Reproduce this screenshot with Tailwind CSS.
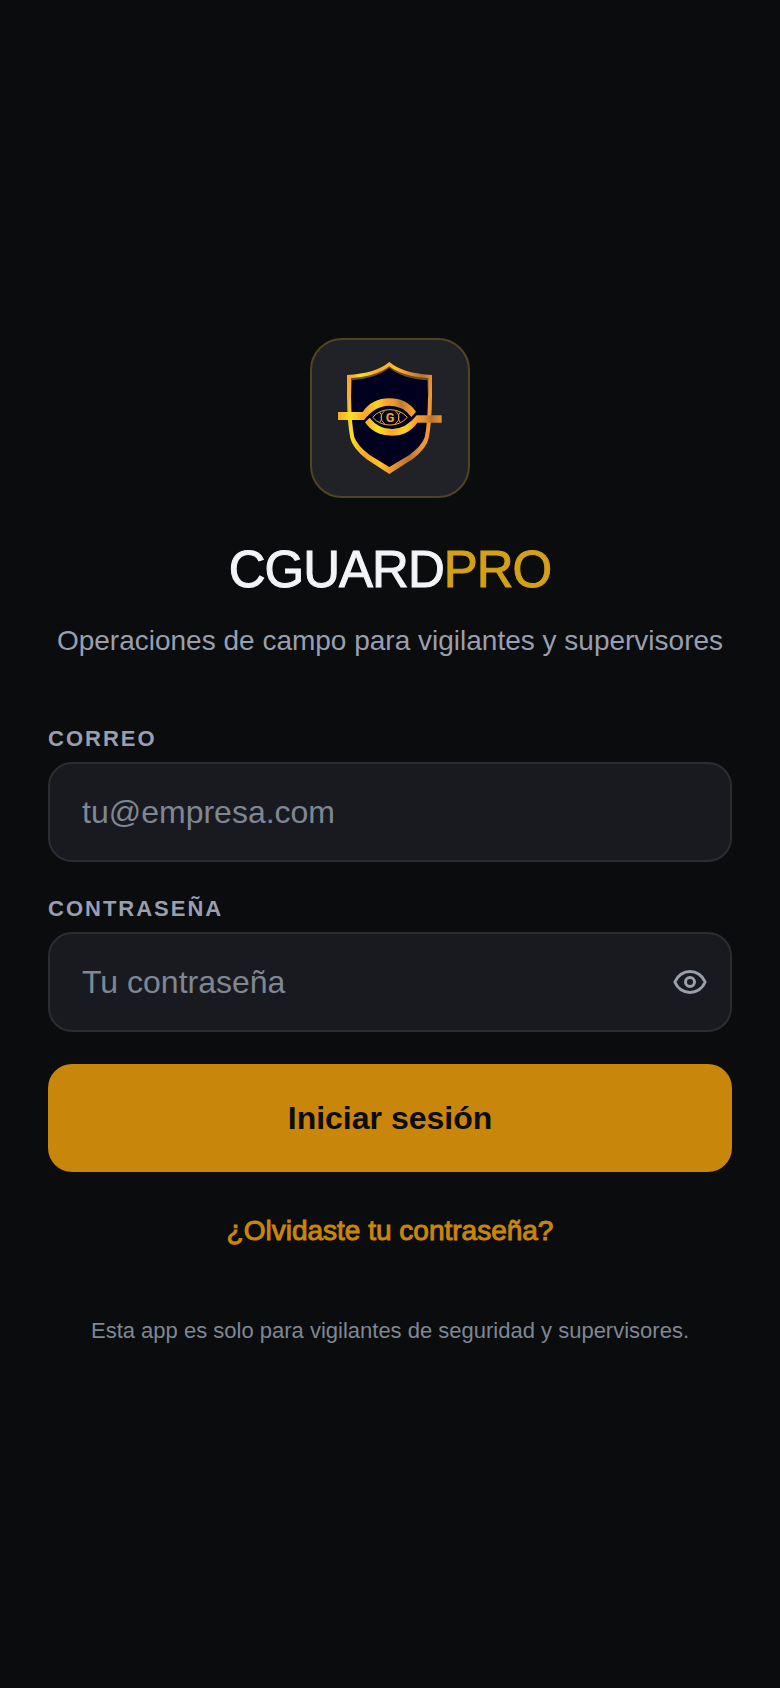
<!DOCTYPE html>
<html lang="es">
<head>
    <meta charset="UTF-8">
    <meta name="viewport" content="width=device-width, initial-scale=1.0">
    <title>CGUARDPRO</title>
    <script src="https://cdn.jsdelivr.net/npm/@tailwindcss/browser@4"></script>
</head>
<body class="bg-[#0a0c0e] font-['Liberation_Sans',Arial,sans-serif]">
    <main class="min-h-screen flex flex-col justify-center px-12">
        <!-- Logo -->
        <div class="self-center size-40 flex items-center justify-center rounded-[32px] border-2 border-[#524322] bg-[#212227]">
            <svg class="size-[120px] shrink-0" viewBox="90 84 360 360" role="img" aria-label="CGuardPro">
                <defs>
                    <linearGradient id="gold" gradientUnits="userSpaceOnUse" x1="140" y1="200" x2="396" y2="240">
                        <stop offset="0" stop-color="#fda52c" />
                        <stop offset="0.12" stop-color="#f6e223" />
                        <stop offset="0.32" stop-color="#fda52c" />
                        <stop offset="0.5" stop-color="#fbc423" />
                        <stop offset="0.58" stop-color="#fda52c" />
                        <stop offset="0.82" stop-color="#b87434" />
                        <stop offset="0.96" stop-color="#f0982e" />
                    </linearGradient>
                    <linearGradient id="band" gradientUnits="userSpaceOnUse" x1="114" y1="0" x2="425" y2="0">
                        <stop offset="0" stop-color="#fda52c" />
                        <stop offset="0.12" stop-color="#f6e223" />
                        <stop offset="0.26" stop-color="#fda52c" />
                        <stop offset="0.38" stop-color="#f8d622" />
                        <stop offset="0.46" stop-color="#fda52c" />
                        <stop offset="0.55" stop-color="#e8952e" />
                        <stop offset="0.61" stop-color="#bd7a34" />
                        <stop offset="0.73" stop-color="#fda52c" />
                    </linearGradient>
                    <linearGradient id="bandLow" gradientUnits="userSpaceOnUse" x1="195" y1="0" x2="425" y2="0">
                        <stop offset="0" stop-color="#fda52c" />
                        <stop offset="0.17" stop-color="#f6e223" />
                        <stop offset="0.35" stop-color="#fda52c" />
                        <stop offset="0.52" stop-color="#f8d622" />
                        <stop offset="0.64" stop-color="#fda52c" />
                        <stop offset="0.78" stop-color="#e0902f" />
                        <stop offset="0.86" stop-color="#b87434" />
                        <stop offset="1" stop-color="#e8952e" />
                    </linearGradient>
                </defs>
                <!-- shield -->
                <path fill="url(#gold)" d="M268 96Q308 130 396 135V200Q395 280 386 325Q380 355 338 387L268 432L199 387Q158 355 151 325Q142 280 141 200V135Q228 130 268 96Z" />
                <path fill="#6b4a2c" d="M268 109Q308 140 385 144V200H153V144Q228 140 268 109Z" />
                <path fill="#00001f" d="M268 114Q308 146 382 151L384 200Q383 280 374 322Q366 347 328 375L268 411L209 375Q172 347 163 322Q154 280 153 200L156 151Q228 146 268 114Z" />
                <!-- bands around the eye -->
                <path fill="url(#band)" d="M114 246H188Q216 205 268 205Q320 205 348 245L334 261Q309 227 268 227Q225 227 192 270H114Z" />
                <path fill="url(#bandLow)" d="M425 256H350Q318 297 276 297Q235 297 209 263L195 277Q222 317 275 317Q325 317 352 278H425Z" />
                <!-- eye -->
                <g fill="none" stroke="#e9a52b" stroke-width="3">
                    <path d="M218 262Q238 239 270 239Q302 239 322 262Q302 285 270 285Q238 285 218 262Z" />
                    <path d="M239 246Q251 262 239 278M301 246Q289 262 301 278" />
                    <path d="M254 242Q232 262 254 282M286 242Q308 262 286 282" />
                </g>
                <text x="270" y="276" text-anchor="middle" font-family="Roboto, sans-serif" font-size="38" font-weight="700" fill="#f5a52b">G</text>
            </svg>
        </div>

        <h1 class="mt-11 text-center text-[51px] leading-[56px] font-normal tracking-[-1px] text-[#f3f4f8] [-webkit-text-stroke:1px]">CGUARD<span class="text-[#d4a017]">PRO</span></h1>
        <p class="mt-[26px] text-center text-[28px] leading-[34px] text-[#9a9fae]">Operaciones de campo para vigilantes y supervisores</p>

        <!-- Formulario de acceso -->
        <form class="mt-[68px] flex flex-col">
            <label for="email" class="text-[22px] leading-[26px] font-bold tracking-[2px] text-[#9a9fae]">CORREO</label>
            <input id="email" type="email" placeholder="tu@empresa.com" class="mt-[10px] h-[100px] w-full rounded-3xl border-2 border-[#2c2d33] bg-[#191a1f] px-8 text-[32px] text-white placeholder:text-[#7f8793]">

            <label for="password" class="mt-[34px] text-[22px] leading-[26px] font-bold tracking-[2px] text-[#9a9fae]">CONTRASEÑA</label>
            <div class="mt-[10px] h-[100px] flex items-center rounded-3xl border-2 border-[#2c2d33] bg-[#191a1f] pr-[22px]">
                <input id="password" type="password" placeholder="Tu contraseña" class="h-full min-w-0 flex-1 px-8 text-[32px] text-white placeholder:text-[#7f8793]">
                <button type="button" aria-label="Mostrar contraseña" class="text-[#9a9fae]">
                    <svg class="size-9" viewBox="0 0 24 24" fill="none" stroke="currentColor" stroke-width="2" stroke-linecap="round" stroke-linejoin="round">
                        <path d="M2.062 12.348a1 1 0 0 1 0-.696 10.75 10.75 0 0 1 19.876 0 1 1 0 0 1 0 .696 10.75 10.75 0 0 1-19.876 0" />
                        <circle cx="12" cy="12" r="3" />
                    </svg>
                </button>
            </div>

            <button type="submit" class="mt-8 h-[108px] rounded-3xl bg-[#c8860a] text-[32px] font-bold text-[#0a0c0e]">Iniciar sesión</button>
        </form>

        <a href="#" class="mt-[42px] self-center text-[28px] leading-[34px] text-[#c8860a] [-webkit-text-stroke:1px]">¿Olvidaste tu contraseña?</a>
        <p class="mt-[68px] pb-1 text-center text-[22px] leading-[30px] text-[#7f8793]">Esta app es solo para vigilantes de seguridad y supervisores.</p>
    </main>
</body>
</html>
